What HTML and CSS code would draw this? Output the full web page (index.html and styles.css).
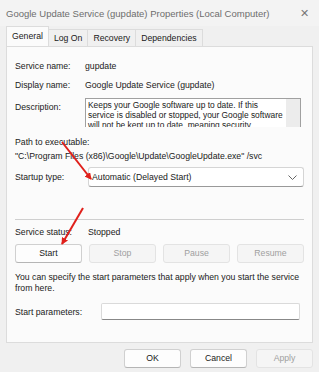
FILE: index.html
```html
<!DOCTYPE html>
<html lang="en">
<head>
    <meta charset="UTF-8">
    <title>Google Update Service (gupdate) Properties</title>
    <link rel="stylesheet" href="styles.css">
</head>
<body>
    <div class="window">
        <div class="titlebar">
            <span class="title">Google Update Service (gupdate) Properties (Local Computer)</span>
            <span class="close">&#x2715;</span>
        </div>

        <div class="tabs">
            <span class="tab active">General</span>
            <span class="tab">Log On</span>
            <span class="tab">Recovery</span>
            <span class="tab">Dependencies</span>
        </div>

        <div class="panel">
            <div class="row">
                <span class="label">Service name:</span>
                <span>gupdate</span>
            </div>
            <div class="row">
                <span class="label">Display name:</span>
                <span>Google Update Service (gupdate)</span>
            </div>
            <div class="row desc-row">
                <span class="label">Description:</span>
                <div class="desc-box">
                    <div class="desc-text">Keeps your Google software up to date. If this service is disabled or stopped, your Google software will not be kept up to date, meaning security</div>
                    <div class="scroll"></div>
                </div>
            </div>

            <div class="path">
                <div>Path to executable:</div>
                <div>"C:\Program Files (x86)\Google\Update\GoogleUpdate.exe" /svc</div>
            </div>

            <div class="row startup-row">
                <span class="label">Startup type:</span>
                <div class="select">
                    <span>Automatic (Delayed Start)</span>
                    <svg width="9" height="5" viewBox="0 0 9 5"><path d="M0.5 0.5 L4.5 4.5 L8.5 0.5" fill="none" stroke="#666" stroke-width="1"/></svg>
                </div>
            </div>

            <div class="separator"></div>

            <div class="row status-row">
                <span class="label">Service status:</span>
                <span class="status">Stopped</span>
            </div>

            <div class="buttons">
                <span class="btn">Start</span>
                <span class="btn disabled">Stop</span>
                <span class="btn disabled">Pause</span>
                <span class="btn disabled">Resume</span>
            </div>

            <p class="hint">You can specify the start parameters that apply when you start the service from here.</p>

            <div class="row params-row">
                <span class="label params-label">Start parameters:</span>
                <div class="input"></div>
            </div>
        </div>

        <div class="footer">
            <span class="btn">OK</span>
            <span class="btn">Cancel</span>
            <span class="btn disabled">Apply</span>
        </div>

        <!-- annotation arrows -->
        <svg class="arrows" width="319" height="372" viewBox="0 0 319 372">
            <defs>
                <marker id="head" markerWidth="7" markerHeight="7" refX="6" refY="3.5" orient="auto" markerUnits="userSpaceOnUse">
                    <path d="M0 0 L7 3.5 L0 7 z" fill="#e0201b"/>
                </marker>
            </defs>
            <line x1="62" y1="142" x2="91" y2="179" stroke="#e0201b" stroke-width="2" marker-end="url(#head)"/>
            <line x1="83" y1="208" x2="62" y2="244" stroke="#e0201b" stroke-width="2" marker-end="url(#head)"/>
        </svg>
    </div>
</body>
</html>
```

FILE: styles.css
```css
body {
    margin: 0;
    padding: 0;
    background-color: #f0f0f0;
    font-family: 'Liberation Sans', Arial, sans-serif;
    font-size: 8.7px;
    color: #1a1a1a;
}
.window {
    position: relative;
    width: 319px;
    height: 372px;
    background-color: #f0f0f0;
    overflow: hidden;
}
.titlebar {
    display: flex;
    justify-content: space-between;
    align-items: center;
    height: 26px;
    padding: 0 10px 0 6px;
    background-color: #f3f3f3;
}
.title {
    font-size: 9.5px;
    color: #6d6d6d;
}
.close {
    font-size: 11px;
    color: #777;
}
.tabs {
    display: flex;
    align-items: flex-end;
    height: 20px;
    padding-left: 6px;
}
.tab {
    height: 16px;
    line-height: 16px;
    padding: 0 5px;
    margin-right: -1px;
    border: 1px solid #dcdcdc;
    border-bottom: none;
    background-color: #f0f0f0;
}
.tab.active {
    height: 19px;
    line-height: 18px;
    background-color: #fbfbfb;
    position: relative;
    z-index: 1;
}
.panel {
    margin: 0 6px;
    height: 297px;
    box-sizing: border-box;
    border: 1px solid #dcdcdc;
    background-color: #fbfbfb;
    padding: 9px 8px 0 8px;
}
.row {
    display: flex;
    align-items: center;
    height: 19px;
}
.label {
    width: 70px;
    flex-shrink: 0;
}
.desc-row {
    align-items: flex-start;
    height: auto;
    margin-top: 4px;
}
.desc-row .label {
    padding-top: 4px;
}
.desc-box {
    display: flex;
    width: 216px;
    height: 29px;
    box-sizing: border-box;
    border: 1px solid #a0a0a0;
    border-bottom: none;
    background-color: #fff;
    overflow: hidden;
}
.desc-text {
    flex: 1;
    padding: 1px 1px 1px 2px;
    font-size: 8.4px;
    line-height: 10px;
}
.scroll {
    width: 14px;
    background-color: #ececec;
}
.path {
    margin-top: 8px;
    line-height: 14px;
}
.startup-row {
    height: 20px;
    margin-top: 4px;
}
.select {
    display: flex;
    justify-content: space-between;
    align-items: center;
    width: 217px;
    height: 20px;
    box-sizing: border-box;
    margin-left: 3px;
    padding: 0 6px 0 3px;
    border: 1px solid #d5d5d5;
    border-bottom-color: #999;
    border-radius: 3px;
    background-color: #fff;
}
.separator {
    height: 1px;
    margin: 32px 0 0 0;
    background-color: #cfcfcf;
}
.status-row {
    margin-top: 2px;
}
.status {
    margin-left: 3px;
}
.buttons {
    display: flex;
    gap: 7px;
    margin-top: 3px;
}
.btn {
    width: 65px;
    height: 17px;
    line-height: 17px;
    text-align: center;
    border: 1px solid #d0d0d0;
    border-bottom-color: #b5b5b5;
    border-radius: 3px;
    background-color: #fdfdfd;
}
.btn.disabled {
    color: #a0a0a0;
    background-color: #f5f5f5;
    border-color: #e3e3e3;
}
.hint {
    margin: 9px 0 0 0;
    line-height: 11px;
}
.params-row {
    height: 17px;
    margin-top: 9px;
}
.params-label {
    width: 86px;
}
.input {
    width: 199px;
    height: 17px;
    box-sizing: border-box;
    border: 1px solid #dadada;
    border-bottom-color: #888;
    border-radius: 2px;
    background-color: #fff;
}
.footer {
    display: flex;
    justify-content: flex-end;
    gap: 9px;
    padding: 6px 6px 0 0;
}
.footer .btn {
    width: 55px;
}
.arrows {
    position: absolute;
    left: 0;
    top: 0;
    pointer-events: none;
}
```
